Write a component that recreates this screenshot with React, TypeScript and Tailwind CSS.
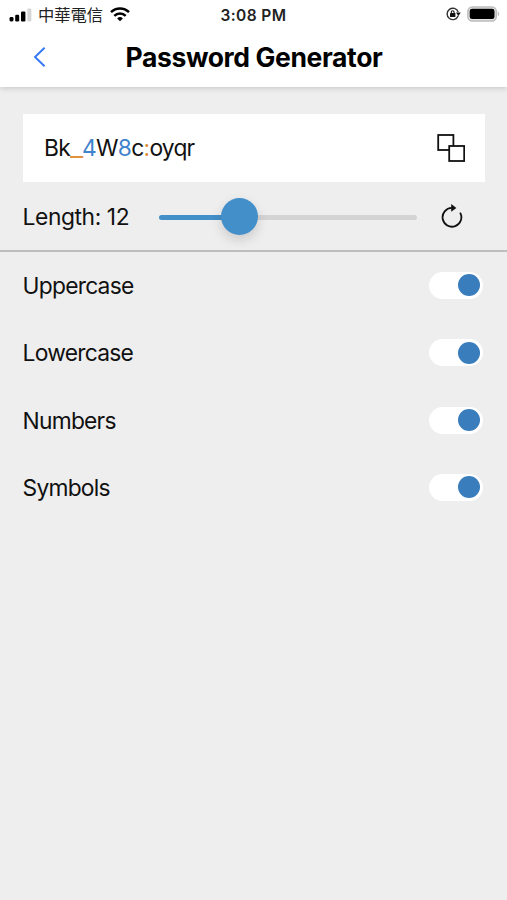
import { useState } from "react";

function SignalIcon() {
  return (
    <svg width="23" height="14" viewBox="0 0 23 14" className="shrink-0">
      <rect x="0.5" y="9" width="4" height="4.5" rx="1.4" fill="#000" />
      <rect x="6.2" y="6.8" width="4" height="6.7" rx="1.2" fill="#000" />
      <rect x="12" y="3.4" width="4.4" height="10.1" rx="1.2" fill="#000" />
      <rect x="18.4" y="0.6" width="4" height="12.9" rx="1.2" fill="#d6d6d6" />
    </svg>
  );
}

function WifiIcon() {
  return (
    <svg width="20" height="15" viewBox="0 0 20 15" className="shrink-0" fill="none" stroke="#000" strokeWidth="2.5">
      <path d="M1 5.2a12.8 12.8 0 0 1 18 0" />
      <path d="M4.3 8.9a8.1 8.1 0 0 1 11.4 0" />
      <path d="M10 14.2l-2.9-2.7a4.1 4.1 0 0 1 5.8 0z" fill="#000" stroke="none" />
    </svg>
  );
}

function OrientationLockIcon() {
  return (
    <svg width="15" height="14" viewBox="0 0 15 14" className="shrink-0">
      <path d="M12.2 8.8a5.7 5.7 0 1 1 0-3.8" fill="none" stroke="#333" strokeWidth="1.4" />
      <path d="M10 5.4h4.8l-2.4 3.6z" fill="#111" />
      <rect x="4" y="6" width="5.4" height="4.1" rx="0.6" fill="#111" />
      <path d="M5.3 6.4V5.2a1.4 1.4 0 0 1 2.8 0v1.2" fill="none" stroke="#111" strokeWidth="1.1" />
    </svg>
  );
}

function BatteryIcon() {
  return (
    <svg width="33" height="16" viewBox="0 0 33 16" className="shrink-0">
      <rect x="0.9" y="0.9" width="28.4" height="14" rx="4.4" fill="#e4e4e4" stroke="#bcbcbc" strokeWidth="1.5" />
      <rect x="2.7" y="2.7" width="24.8" height="10.4" rx="2.4" fill="#000" />
      <path d="M30.8 5.6c1.8.6 1.8 4 0 4.6z" fill="#bcbcbc" />
    </svg>
  );
}

function CopyIcon() {
  return (
    <svg width="28" height="28" viewBox="0 0 28 28" fill="#fff" stroke="#111" strokeWidth="1.8">
      <rect x="1.2" y="1" width="15.2" height="15" />
      <rect x="12.2" y="12" width="15" height="15" />
    </svg>
  );
}

function RefreshIcon() {
  return (
    <svg width="22" height="24" viewBox="0 0 22 24">
      <path d="M19.1 8.6A9.4 9.4 0 1 1 10.8 3.9" fill="none" stroke="#111" strokeWidth="1.8" />
      <path d="M10.2 0l5.2 3.9-5.2 3.9z" fill="#111" />
    </svg>
  );
}

function Toggle({ on, onChange }: { on: boolean; onChange: () => void }) {
  return (
    <button
      role="switch"
      aria-checked={on}
      onClick={onChange}
      className={`mb-[0.8px] flex h-[27px] w-[54px] items-center rounded-full bg-white px-[2.5px] ${on ? "justify-end" : "justify-start"}`}
    >
      <span className={`size-[22px] rounded-full ${on ? "bg-[#397dbd]" : "bg-gray-300"}`} />
    </button>
  );
}

const options = ["Uppercase", "Lowercase", "Numbers", "Symbols"];

export default function App() {
  const [enabled, setEnabled] = useState([true, true, true, true]);
  return (
    <div className="flex h-[900px] w-[507px] flex-col overflow-hidden bg-[#eeeeee] font-[Inter,'Noto_Sans_CJK_TC',sans-serif] text-[#111]">
      <header className="flex h-[87px] shrink-0 flex-col bg-white shadow-[0_1px_6px_rgba(0,0,0,0.18)]">
        <div className="grid h-[30px] grid-cols-3 items-center">
          <div className="flex items-center pl-[9px]">
            <SignalIcon />
            <span className="ml-[6px] text-[16.3px] leading-[30px] whitespace-nowrap text-[#222]">中華電信</span>
            <span className="ml-[7px] pb-[1px]"><WifiIcon /></span>
          </div>
          <span className="pt-[1px] text-center text-[15.5px] font-semibold tracking-[0.4px] text-[#222]">3:08 PM</span>
          <div className="flex items-center justify-end gap-[6px] pr-[7px] pb-[2px]">
            <OrientationLockIcon />
            <BatteryIcon />
          </div>
        </div>
        <div className="grid h-[55px] grid-cols-[80px_1fr_80px] items-center">
          <button aria-label="Back" className="pb-px pl-[33px]">
            <svg width="13" height="20" viewBox="0 0 13 20" fill="none" stroke="#3478f6" strokeWidth="1.9">
              <path d="M11.6 0.8L2 10l9.6 9.2" />
            </svg>
          </button>
          <h1 className="pt-px pl-px text-center text-[26.5px] font-bold tracking-[-0.38px] whitespace-nowrap text-black">Password Generator</h1>
        </div>
      </header>

      <main className="flex flex-col">
        <section className="border-b-2 border-[#bdbdbd] pt-[27px]">
          <div className="mx-[22.5px] flex h-[68px] items-center justify-between bg-white pr-[19.5px] pl-[21.5px]">
            <span className="flex items-baseline pt-px text-[22.8px] tracking-[-0.7px]">
              <span>Bk</span>
              <span className="inline-block w-[12px] origin-left scale-x-[1.25] font-medium text-[#e0913a]">_</span>
              <span className="text-[#3f83cc]">4</span>
              <span>W</span>
              <span className="text-[#3f83cc]">8</span>
              <span>c</span>
              <span className="text-[#e0913a]">:</span>
              <span className="tracking-[-0.8px]">oyqr</span>
            </span>
            <button aria-label="Copy"><CopyIcon /></button>
          </div>
          <div className="flex h-[68px] items-center pl-[22.5px]">
            <span className="w-[136px] pt-[2px] text-[22.8px] tracking-[-0.4px] whitespace-nowrap">Length: 12</span>
            <div className="flex w-[258px] items-center">
              <div className="mt-[2px] h-[5px] w-[64px] rounded-l-full bg-[#438fc9]" />
              <div className="z-10 -mx-[2px] size-[37px] rounded-full bg-[#438fc9] shadow-[0_5px_12px_rgba(0,0,0,0.15)]" />
              <div className="mt-[2px] h-[5px] flex-1 rounded-r-sm bg-[#d4d4d4]" />
            </div>
            <button aria-label="Regenerate" className="ml-[24px] pb-px"><RefreshIcon /></button>
          </div>
        </section>

        {options.map((label, index) => (
          <div key={label} className="flex h-[67.4px] items-center justify-between pr-[24.5px] pl-[22.5px]">
            <span className="pt-px text-[22.8px] tracking-[-0.75px]">{label}</span>
            <Toggle
              on={enabled[index]}
              onChange={() => setEnabled(enabled.map((value, i) => (i === index ? !value : value)))}
            />
          </div>
        ))}
      </main>
    </div>
  );
}
